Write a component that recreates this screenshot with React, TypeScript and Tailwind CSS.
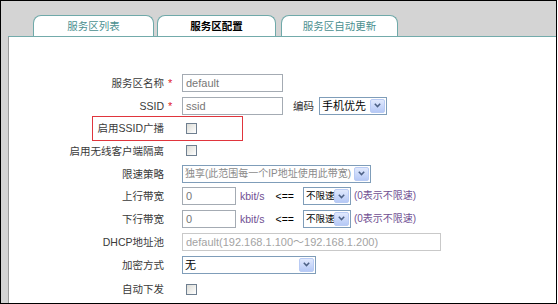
import type { ReactNode } from 'react'

const font = "font-['Liberation_Sans','Noto_Sans_CJK_SC',sans-serif]"

function Chevron() {
  return (
    <svg width="7" height="5" viewBox="0 0 7 5">
      <path d="M0.8 0.8 L3.5 3.6 L6.2 0.8" stroke="#4d6185" strokeWidth="1.5" fill="none" />
    </svg>
  )
}

function Select({ w, text, muted, size = 'text-[11px]' }: { w: string; text: string; muted?: boolean; size?: string }) {
  return (
    <div className={`flex h-[18px] items-center border border-[#7f9db9] bg-white pl-[2px] pr-[1px] ${w}`}>
      <span className={`flex-1 overflow-hidden whitespace-nowrap leading-[14px] ${size} ${muted ? 'text-[#8a8a8a]' : 'text-black'}`}>{text}</span>
      <span className="flex h-[14px] w-[15px] shrink-0 items-center justify-center rounded-[2px] border border-[#b9cbf4] bg-gradient-to-b from-[#e1e9fd] to-[#b6c9f6]">
        <Chevron />
      </span>
    </div>
  )
}

function Input({ w, value, disabled }: { w: string; value: string; disabled?: boolean }) {
  return (
    <div
      className={`flex h-[18px] items-center whitespace-nowrap border pl-[3px] text-[11px] leading-[14px] ${w} ${
        disabled ? 'border-[#c9c9c9] text-[#a3a3a3]' : 'border-[#a4abb3] text-[#777]'
      }`}
    >
      {value}
    </div>
  )
}

function Checkbox() {
  return <span className="ml-[4px] block h-[11px] w-[11px] border border-[#6f7f90] bg-gradient-to-br from-[#dcdcd6] to-white" />
}

function Row({ label, star, h, children, extra }: { label: string; star?: boolean; h: string; children?: ReactNode; extra?: ReactNode }) {
  return (
    <div className={`relative flex items-center ${h}`}>
      <div className="w-[155px] text-right text-[10.5px] leading-[14px] text-[#3a3a3a]">{label}</div>
      <div className="w-[18px] pl-[4px] text-[11px] leading-[14px] text-[#e0202a]">{star ? '*' : ''}</div>
      <div className="flex items-center">{children}</div>
      {extra}
    </div>
  )
}

function Bandwidth() {
  return (
    <>
      <Input w="w-[54px]" value="0" />
      <span className="ml-[4px] text-[10.5px] leading-[14px] text-[#6f4f92]">kbit/s</span>
      <span className="ml-[11px] text-[10.5px] leading-[14px] text-black">&lt;==</span>
      <div className="ml-[9px]">
        <Select w="w-[48px]" text="不限速" size="text-[9.5px]" />
      </div>
      <span className="ml-[3px] text-[10px] leading-[14px] text-[#6f4f92]">(0表示不限速)</span>
    </>
  )
}

export default function App() {
  const tabs = [
    { name: '服务区列表', w: 'w-[121px]', active: false, ml: '' },
    { name: '服务区配置', w: 'w-[119px]', active: true, ml: 'ml-[3px]' },
    { name: '服务区自动更新', w: 'w-[117px]', active: false, ml: 'ml-[5px]' },
  ]

  return (
    <div className={`h-[304px] w-[558px] bg-white ${font}`}>
      <div className="flex h-[304px] w-[557px] flex-col border border-black bg-[#d4d4d4] pl-[7px]">
        <div className="flex h-[36px] shrink-0 items-end border-b border-[#73abab] pl-[25px]">
          {tabs.map(t => (
            <div
              key={t.name}
              className={`flex h-[21px] items-center justify-center rounded-t-[8px] border border-b-0 border-[#6fa9a9] bg-white text-[10.5px] leading-[14px] ${t.w} ${t.ml} ${
                t.active ? 'font-bold text-black' : 'text-[#4a8f8f]'
              }`}
            >
              {t.name}
            </div>
          ))}
        </div>

        <div className="flex-1 border-l border-[#9a9a9a] bg-white pt-[35px]">
          <Row label="服务区名称" star h="h-[22px]">
            <Input w="w-[101px]" value="default" />
          </Row>
          <Row label="SSID" star h="h-[23px]">
            <Input w="w-[101px]" value="ssid" />
            <span className="ml-[10px] text-[10.5px] leading-[14px] text-[#333]">编码</span>
            <div className="ml-[5px]">
              <Select w="w-[68px]" text="手机优先" />
            </div>
          </Row>
          <Row
            label="启用SSID广播"
            h="h-[22px]"
            extra={<div className="pointer-events-none absolute left-[83px] top-[-1px] h-[25px] w-[151px] border border-[#e0353d]" />}
          >
            <Checkbox />
          </Row>
          <Row label="启用无线客户端隔离" h="h-[23px]">
            <Checkbox />
          </Row>
          <Row label="限速策略" h="h-[23px]">
            <Select w="w-[189px]" text="独享(此范围每一个IP地址使用此带宽)" muted size="text-[10px]" />
          </Row>
          <Row label="上行带宽" h="h-[22px]">
            <Bandwidth />
          </Row>
          <Row label="下行带宽" h="h-[23px]">
            <Bandwidth />
          </Row>
          <Row label="DHCP地址池" h="h-[23px]">
            <Input w="w-[259px]" value="default(192.168.1.100～192.168.1.200)" disabled />
          </Row>
          <Row label="加密方式" h="h-[23px]">
            <Select w="w-[134px]" text="无" />
          </Row>
          <Row label="自动下发" h="h-[26px]">
            <Checkbox />
          </Row>
        </div>
      </div>
    </div>
  )
}
